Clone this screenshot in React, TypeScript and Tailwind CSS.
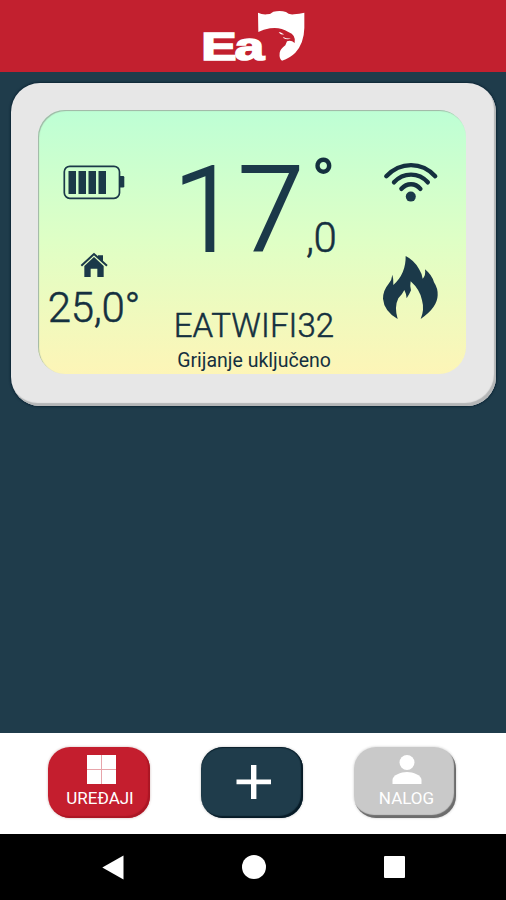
import React from "react";

function Logo() {
  return (
    <svg width="130" height="72" viewBox="0 0 390 216" className="mr-[-4px]" fill="#fff">
      <text
        transform="translate(34 180) scale(1.37 1)"
        fontFamily="Liberation Sans, Arial, sans-serif"
        fontWeight="700"
        fontSize="116"
        letterSpacing="-4"
        stroke="#fff"
        strokeWidth="5"
      >
        Ea
      </text>
      <path d="M204 38 Q216 44 230 43 Q242 43 250 35 Q272 31 288 36 Q296 45 312 43 Q328 42 343 38 L343 84 Q342 130 316 158 Q300 174 276 182 Q267 176 269 158 Q272 146 286 136 L291 124 Q303 119 314 129 Q319 105 295 96 Q270 80 240 85 Q220 88 205 96 Z" />
      <path d="M266 97 Q272 95 276 100 L282 103 Q274 105 269 100 Z" />
      <path d="M280 111 Q290 117 304 115 Q292 121 280 114 Z" />
    </svg>
  );
}

function Battery() {
  return (
    <svg width="62" height="35" viewBox="0 0 62 35" fill="#1b3949">
      <rect x="1.3" y="1.3" width="55.2" height="32" rx="5.5" fill="none" stroke="#1b3949" strokeWidth="1.7" />
      <path d="M57 11h3q1.3 0 1.3 1.3v9q0 1.3-1.3 1.3h-3z" />
      <rect x="5.5" y="6" width="7.5" height="23" />
      <rect x="15.5" y="6" width="7.5" height="23" />
      <rect x="25.5" y="6" width="7.5" height="23" />
      <rect x="35.5" y="6" width="7.5" height="23" />
    </svg>
  );
}

function House() {
  return (
    <svg width="28" height="26" viewBox="240 38 84 78" fill="#1b3949">
      <path d="M244 79 L282 44 L321 79" fill="none" stroke="#1b3949" strokeWidth="6" />
      <path d="M294 48h15v22l-15-13z" />
      <path d="M282 53 L311 80 V113 H292 V88 H272 V113 H253 V80Z" />
    </svg>
  );
}

function Wifi() {
  return (
    <svg width="56" height="42" viewBox="0 0 56 42" fill="none" stroke="#14303f" strokeWidth="4.4" strokeLinecap="round">
      <path d="M3.3 15.2 Q14 4.1 28 4.1 Q42 4.1 52.2 15.2" />
      <path d="M11 21.3 Q18 13.6 28 13.6 Q38 13.6 44.8 21.3" />
      <path d="M18.4 27.8 Q22.5 23.2 28 23.2 Q33.5 23.2 37.4 27.8" />
      <circle cx="27.8" cy="35.6" r="5" fill="#1b3949" stroke="none" />
    </svg>
  );
}

function Flame() {
  return (
    <svg width="58" height="65" viewBox="66 44 174 195" fill="#1b3949">
      <path d="M137 47 Q163 60 177 86 Q186 100 188 115 Q198 106 195 87 Q216 104 222 126 Q234 144 233 165 Q232 202 182 236 Q194 208 186 180 Q180 148 152 123 Q149 140 153 150 Q148 162 140 174 Q139 160 133 149 Q127 162 115 174 Q102 200 113 236 Q72 212 69 175 Q69 150 86 130 Q96 118 97 103 Q101 115 100 134 Q138 100 137 47Z" />
    </svg>
  );
}

export default function App() {
  return (
    <div className="flex h-[900px] w-[506px] flex-col overflow-hidden bg-[#1f3c4b] font-['Roboto',sans-serif] text-[#14303f]">
      <header className="flex h-[72px] justify-center bg-[#c2202f]">
        <Logo />
      </header>

      <main className="h-[661px] pt-[11px] pl-[11px]">
        <section className="h-[323px] w-[485px] rounded-[29px] bg-[#e7e7e7] pt-[27px] pl-[27px] shadow-[inset_-2px_-3px_1px_#b4b6b7,0_0_2px_1px_#0d2636]">
          <div className="flex h-[264px] w-[428px] rounded-[27px] bg-linear-to-b from-[#bdffd5] via-[#dfffc5] to-[#fdf5b7] shadow-[inset_1px_1px_1px_#9fb5a5]">
            <div className="flex w-[112px] flex-col items-center">
              <div className="mt-[55px]">
                <Battery />
              </div>
              <div className="mt-[52px]">
                <House />
              </div>
              <div className="mt-[6px] text-[42px] leading-[48px] font-light tracking-[-0.3px] whitespace-nowrap [-webkit-text-stroke:0.5px_#14303f]">25,0°</div>
            </div>

            <div className="flex w-[208px] flex-col items-center">
              <div className="flex h-[190px] w-full pl-[23px]">
                <div className="w-[133px] pt-[31px] text-[119px] leading-[140px] font-light tracking-[-1px] whitespace-nowrap text-[#1b3949] [-webkit-text-stroke:2px_#1b3949]">17</div>
                <div className="flex flex-col">
                  <div className="h-[78px] pt-[39px] pl-[6px] text-[60px] leading-[64px] font-light [-webkit-text-stroke:1.8px_#14303f]">°</div>
                  <div className="pt-[26px] text-[42px] leading-[48px] font-light tracking-[-0.5px] whitespace-nowrap [-webkit-text-stroke:0.5px_#14303f]">,0</div>
                </div>
              </div>
              <div className="mt-[6px] text-[33px] leading-[40px] font-light tracking-[0.1px] whitespace-nowrap [-webkit-text-stroke:0.5px_#14303f]">EATWIFI32</div>
              <div className="mt-[3px] text-[19.5px] leading-[24px] whitespace-nowrap">Grijanje uključeno</div>
            </div>

            <div className="flex flex-1 flex-col items-center pr-[2px]">
              <div className="mt-[51px]">
                <Wifi />
              </div>
              <div className="mt-[52px]">
                <Flame />
              </div>
            </div>
          </div>
        </section>
      </main>

      <nav className="flex h-[101px] gap-[51px] bg-white pt-[14px] pl-[48px] text-[17px] leading-[20px] text-white">
        <button className="flex h-[71px] w-[102px] flex-col items-center rounded-[22px] bg-[#c41e2e] pt-[8px] shadow-[inset_-2px_-2px_1px_#ab1624,0_0_2px_1px_#e8dddd]">
          <span className="ml-[4px] grid h-[29px] w-[29px] grid-cols-2 gap-px bg-[#e7a4aa]">
            <span className="bg-white" />
            <span className="bg-white" />
            <span className="bg-white" />
            <span className="bg-white" />
          </span>
          <span className="mt-[4px] ml-[2px]">UREĐAJI</span>
        </button>
        <button className="flex h-[71px] w-[102px] items-center justify-center rounded-[22px] bg-[#1f3c4b] shadow-[inset_-2px_-2px_1px_#071b27,inset_0_1px_1px_#0a202d,0_0_2px_1px_#e2e2e2]">
          <svg width="38" height="38" viewBox="0 0 38 38" fill="#fff">
            <path d="M18 1h5.4v14.5H38v4.8H23.4V35H18V20.3H3.5v-4.8H18z" />
          </svg>
        </button>
        <button className="flex h-[71px] w-[102px] flex-col items-center rounded-[22px] bg-[#c9c9c9] pt-[8px] shadow-[inset_-2px_-3px_1px_#6c6c6c,0_0_2px_1px_#e6e6e6]">
          <svg width="30" height="29" viewBox="0 0 30 29" fill="#fff" className="ml-[3px]">
            <circle cx="15" cy="7.5" r="7.5" />
            <path d="M.5 29v-4C.5 20 9 17 15 17s14.5 3 14.5 8v4z" />
          </svg>
          <span className="mt-[4px] ml-[3px]">NALOG</span>
        </button>
      </nav>

      <footer className="flex h-[66px] items-center bg-black pl-[102px]">
        <svg width="22" height="25" viewBox="0 0 22 25" fill="#fff">
          <path d="M21.5 .5v24L.3 12.5z" />
        </svg>
        <span className="ml-[118px] h-[24px] w-[24px] rounded-full bg-white" />
        <span className="ml-[118px] h-[22px] w-[21px] rounded-[1px] bg-white" />
      </footer>
    </div>
  );
}
